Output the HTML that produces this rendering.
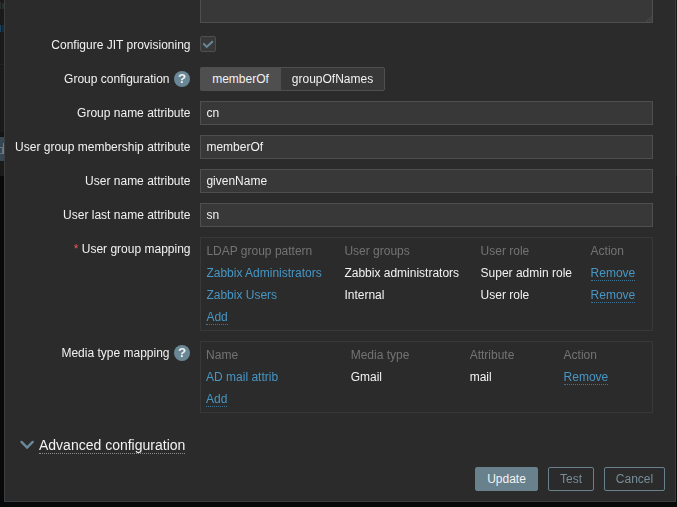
<!DOCTYPE html>
<html><head><meta charset="utf-8">
<style>
*{box-sizing:border-box;margin:0;padding:0}
html,body{width:677px;height:507px;overflow:hidden;background:#07090a;font-family:"Liberation Sans",sans-serif;font-size:12px;color:#f2f2f2}
.abs{position:absolute}
#bgstrip{left:0;top:0;width:4px;height:507px;background:#1a1a1a}
#dlg{left:4px;top:-40px;width:672px;height:542px;background:#2b2b2b;border:1px solid #3d3d3d}
.lbl{position:absolute;right:486.5px;white-space:nowrap;line-height:14px;height:14px;color:#f2f2f2}
.inp{position:absolute;left:200px;width:453px;height:24px;background:#383838;border:1px solid #4f4f4f;color:#f2f2f2;line-height:22px;padding-left:5.4px}
.tbl{position:absolute;left:200px;width:453px;border:1px solid #383838}
.c{position:absolute;white-space:nowrap;line-height:14px;height:14px}
.h{color:#737373}
.lnk{color:#4796c4}
.dot{border-bottom:1px dotted rgba(71,150,196,.7);height:15px}
.help{position:absolute;width:16px;height:16px;border-radius:50%;background:#6a8796;color:#f2f2f2;font-weight:bold;font-size:13.5px;line-height:16px;text-align:center}
.btn{position:absolute;top:467px;height:24px;line-height:22px;text-align:center;border:1px solid #69808d;color:#768d99;border-radius:2px}
</style></head><body>
<div id="gs" style="position:absolute;left:0;top:0;width:677px;height:507px;will-change:transform">
<div id="bgstrip" class="abs"></div>
<div class="abs" style="left:676px;top:0;width:1px;height:176px;background:#1a1a1a"></div>
<div class="abs" style="left:0;top:2px;width:1px;height:7px;background:#2c3028"></div>
<div class="abs" style="left:2px;top:3px;width:2px;height:6px;background:#22303a"></div>
<div class="abs" style="left:0;top:25px;width:1px;height:7px;background:#1c4666"></div>
<div class="abs" style="left:2px;top:25px;width:2px;height:7px;background:#1a2c3a"></div>
<div class="abs" style="left:0;top:64px;width:4px;height:1px;background:#222"></div>
<div class="abs" style="left:0;top:132px;width:4px;height:5px;background:#141414"></div>
<div class="abs" style="left:0;top:137px;width:4px;height:24px;background:#364853"></div>
<div class="abs" style="left:3px;top:143px;width:1px;height:11px;background:#767a7c"></div>
<div class="abs" style="left:-1px;top:147px;width:4px;height:7px;border:1px solid #66747d"></div>
<div class="abs" style="left:0;top:176px;width:4px;height:331px;background:#060809"></div>
<div id="dlg" class="abs"></div>

<div class="abs" style="left:200px;top:-30px;width:453px;height:53px;background:#383838;border:1px solid #4f4f4f"></div>
<svg class="abs" style="left:646px;top:16px" width="6" height="6" viewBox="0 0 6 6"><path d="M0.2 6 L6 0.2 M3.2 6 L6 3.2" fill="none" stroke="#505050" stroke-width="1"/></svg>

<div class="lbl" style="top:38px">Configure JIT provisioning</div>
<div class="abs" style="left:200px;top:36px;width:16px;height:16px;background:#383838;border:1px solid #4f4f4f;border-radius:2px">
<svg width="14" height="14" viewBox="0 0 14 14" style="position:absolute;left:0;top:0"><path d="M2.8 6.9 L5.7 9.9 L11.3 4.7" fill="none" stroke="#6a8a9c" stroke-width="2" stroke-linecap="round"/></svg>
</div>

<div class="lbl" style="top:72px;right:507.5px">Group configuration</div>
<div class="help" style="left:174px;top:71px">?</div>
<div class="abs" style="left:200px;top:67px;width:185px;height:24px;border:1px solid #4f4f4f;background:#383838;border-radius:2px"></div>

<div class="lbl" style="top:106px">Group name attribute</div>
<div class="inp" style="top:101px">cn</div>
<div class="lbl" style="top:140px">User group membership attribute</div>
<div class="inp" style="top:135px">memberOf</div>
<div class="lbl" style="top:174px">User name attribute</div>
<div class="inp" style="top:169px">givenName</div>
<div class="lbl" style="top:208px">User last name attribute</div>
<div class="inp" style="top:203px">sn</div>

<div class="lbl" style="top:242px"><span style="color:#e45959">*</span> User group mapping</div>
<div class="tbl" style="top:237px;height:94px"></div>
<div class="c h" style="left:206.4px;top:244px">LDAP group pattern</div>
<div class="c h" style="left:344.4px;top:244px">User groups</div>
<div class="c h" style="left:480.6px;top:244px">User role</div>
<div class="c h" style="left:590.6px;top:244px">Action</div>
<div class="c lnk" style="left:206.4px;top:266px">Zabbix Administrators</div>
<div class="c" style="left:344.4px;top:266px">Zabbix administrators</div>
<div class="c" style="left:480.6px;top:266px">Super admin role</div>
<div class="c lnk dot" style="left:590.6px;top:266px">Remove</div>
<div class="c lnk" style="left:206.4px;top:288px">Zabbix Users</div>
<div class="c" style="left:344.4px;top:288px">Internal</div>
<div class="c" style="left:480.6px;top:288px">User role</div>
<div class="c lnk dot" style="left:590.6px;top:288px">Remove</div>
<div class="c lnk dot" style="left:206.4px;top:310px">Add</div>

<div class="lbl" style="top:346px;right:507.5px">Media type mapping</div>
<div class="help" style="left:174px;top:345px">?</div>
<div class="tbl" style="top:341px;height:72px"></div>
<div class="c h" style="left:206.1px;top:348px">Name</div>
<div class="c h" style="left:350.7px;top:348px">Media type</div>
<div class="c h" style="left:469.7px;top:348px">Attribute</div>
<div class="c h" style="left:563.6px;top:348px">Action</div>
<div class="c lnk" style="left:206.1px;top:370px">AD mail attrib</div>
<div class="c" style="left:350.7px;top:370px">Gmail</div>
<div class="c" style="left:469.7px;top:370px">mail</div>
<div class="c lnk dot" style="left:563.6px;top:370px">Remove</div>
<div class="c lnk dot" style="left:206.1px;top:392px">Add</div>

<svg class="abs" style="left:19px;top:438px" width="16" height="14" viewBox="0 0 16 14"><path d="M2.5 3.9 L8.1 9.6 L13.7 3.9" fill="none" stroke="#6a8a9c" stroke-width="2.4" stroke-linecap="round"/></svg>
<div class="abs" style="left:39px;top:437px;font-size:14px;line-height:16px;height:17px;white-space:nowrap;border-bottom:1px dotted #8c8c8c">Advanced configuration</div>

<div class="btn" style="left:548px;width:46px">Test</div>
<div class="btn" style="left:604px;width:61px">Cancel</div>
<div class="abs" style="left:281px;top:68px;width:103px;height:22px;line-height:22px;text-align:center;color:#f2f2f2">groupOfNames</div>
</div>
<div class="abs" style="left:200px;top:67px;width:81px;height:24px;background:#4f4f4f;line-height:24px;text-align:center;color:#f2f2f2;border-radius:2px 0 0 2px">memberOf</div>
<div class="btn" style="left:475px;width:63px;background:#69808d;border-color:#69808d;color:#f2f2f2">Update</div>
</body></html>
